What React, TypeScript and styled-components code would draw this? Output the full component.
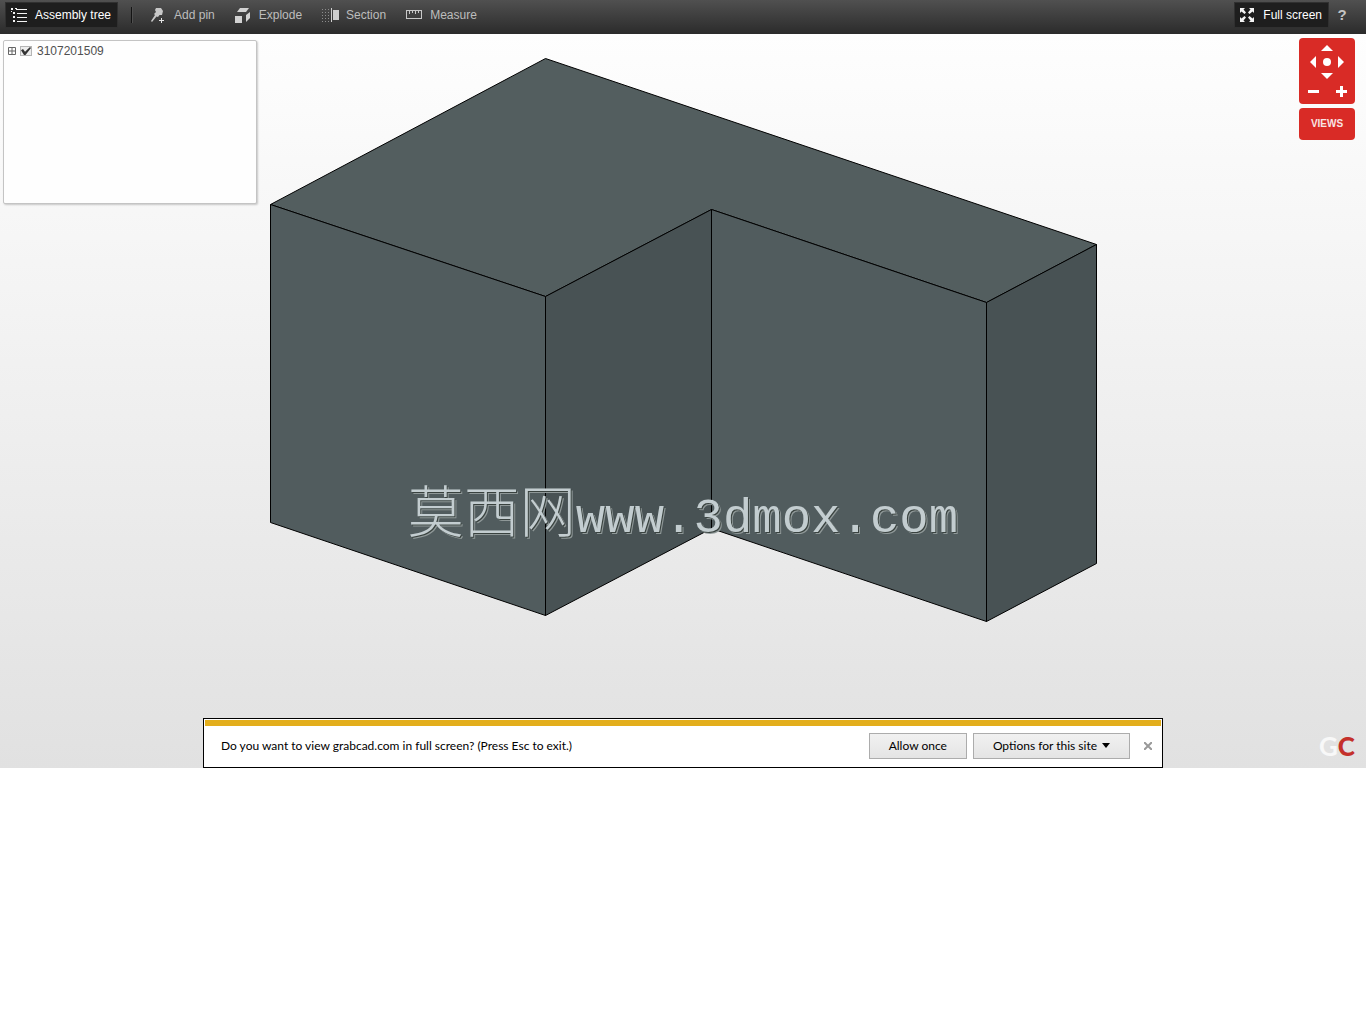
import React from "react";
import styled, { createGlobalStyle } from "styled-components";

const GlobalStyle = createGlobalStyle`
  *, *::before, *::after { box-sizing: border-box; }
  body {
    margin: 0;
    background: #fff;
    font-family: "Liberation Sans", Arial, sans-serif;
    font-size: 12px;
    line-height: 16px;
  }
  button { font: inherit; cursor: pointer; }
`;

const Toolbar = styled.header`
  display: flex;
  align-items: center;
  justify-content: space-between;
  height: 34px;
  padding: 0 17px 4px 5px;
  background: linear-gradient(#505050, #2b2b2b);
`;

const ToolGroup = styled.div<{ $gap?: number }>`
  display: flex;
  align-items: center;
  gap: ${(p) => p.$gap ?? 0}px;
`;

const ToolButton = styled.button<{ $active?: boolean }>`
  display: flex;
  align-items: center;
  gap: 7px;
  height: 26px;
  padding: 0 6px 0 5px;
  border: 1px solid ${(p) => (p.$active ? "#303030" : "transparent")};
  background: ${(p) => (p.$active ? "#1e1e1e" : "transparent")};
  color: ${(p) => (p.$active ? "#fff" : "#bdbdbd")};
  white-space: nowrap;
`;

const Divider = styled.span`
  width: 2px;
  height: 16px;
  margin: 0 11px 0 13px;
  border-left: 1px solid #141414;
  border-right: 1px solid #505050;
`;

const HelpButton = styled.button`
  padding: 0;
  width: 14px;
  margin-left: 6px;
  border: 0;
  background: transparent;
  color: #c4c4c4;
  font-size: 15px;
  font-weight: bold;
`;

const Icon = styled.svg`
  display: block;
  flex: none;
`;

const Viewer = styled.main`
  display: grid;
  background: linear-gradient(#fefefe, #e1e1e1);
  & > * { grid-area: 1 / 1; }
`;

const Scene = styled.svg`
  display: block;
  width: 100%;
  height: auto;
`;

const TreePanel = styled.aside`
  place-self: start;
  width: 254px;
  height: 164px;
  margin: 6px 3px;
  padding: 2px 4px;
  border: 1px solid #c4c4c4;
  border-radius: 2px;
  background: #fefefe;
  box-shadow: 1px 1px 2px rgba(0, 0, 0, 0.2);
`;

const TreeRow = styled.div`
  display: flex;
  align-items: center;
  gap: 4px;
  color: #505050;
`;

const Expander = styled.button`
  padding: 0;
  border: 0;
  background: transparent;
`;

const TreeLabel = styled.label`
  display: flex;
  align-items: center;
  gap: 5px;
`;

const TreeCheck = styled.input`
  appearance: none;
  display: grid;
  width: 12px;
  height: 10px;
  margin: 0;
  border: 1px solid #b5b5b5;
  background: #ededed;
  &:checked::after {
    content: "";
    width: 10px;
    height: 8px;
    background: #333;
    clip-path: polygon(0 40%, 20% 25%, 40% 58%, 90% 0, 100% 12%, 45% 100%, 30% 100%);
  }
`;

const ViewControls = styled.div`
  place-self: start end;
  display: grid;
  gap: 4px;
  width: 56px;
  margin: 4px 11px;
`;

const NavPad = styled.div`
  display: grid;
  grid-template-columns: repeat(6, 1fr);
  grid-template-rows: 10px 18px 10px 20px;
  align-items: center;
  height: 66px;
  padding: 5px 7px;
  border-radius: 4px;
  background: #d92b26;
`;

const NavButton = styled.button<{ $span: string }>`
  grid-column: ${(p) => p.$span};
  display: grid;
  place-items: center;
  height: 100%;
  padding: 0;
  border: 0;
  background: transparent;
`;

const ViewsButton = styled.button`
  height: 32px;
  padding: 0;
  border: 0;
  border-radius: 4px;
  background: #d92b26;
  color: #f8e4e3;
  font-size: 10px;
  font-weight: bold;
`;

const Watermark = styled.div`
  place-self: start center;
  display: flex;
  align-items: baseline;
  margin-top: 438px;
  color: #c3cdd0;
  font-family: "Liberation Mono", monospace;
  font-size: 49px;
  line-height: 72px;
  white-space: nowrap;
  text-shadow: 1px 1px 0 #39423f, 2px 2px 0 #8f9898;
  pointer-events: none;
`;

const WatermarkName = styled.span`
  font-family: "Noto Sans CJK SC", sans-serif;
  font-size: 56px;
  font-weight: 300;
`;

const Brand = styled.div`
  place-self: end;
  margin: 0 11px 7px;
  color: #f8f8f8;
  font-family: Lato, sans-serif;
  font-size: 26px;
  font-weight: 700;
  line-height: 30px;
`;

const BrandAccent = styled.span`
  color: #c4302b;
  font-weight: 900;
`;

const Prompt = styled.section`
  place-self: end center;
  display: flex;
  align-items: center;
  width: 960px;
  max-width: 100%;
  height: 50px;
  padding: 5px 8px 0 17px;
  border: 1px solid #000;
  background: linear-gradient(#e3ae1c, #e3ae1c) 50% 1px / calc(100% - 2px) 6px no-repeat #fff;
  color: #000;
  font-family: Lato, sans-serif;
`;

const PromptText = styled.p`
  flex: 1;
  margin: 0;
`;

const PromptButton = styled.button`
  display: flex;
  align-items: center;
  gap: 5px;
  height: 26px;
  margin-right: 6px;
  padding: 0 19px;
  border: 1px solid #acacac;
  background: linear-gradient(#f1f1f1, #e4e4e4);
  color: #000;
  white-space: nowrap;
`;

const CloseButton = styled.button`
  display: grid;
  place-items: center;
  width: 12px;
  height: 12px;
  margin-left: 6px;
  padding: 0;
  border: 0;
  background: transparent;
`;

const TreeIcon = () => (
  <Icon width="17" height="16" viewBox="0 0 17 16" fill="#f4f4f4">
    <path d="M0 1h2v2H0zM4 1h2v1H4zM2 5h2v2H2zM2 9h2v2H2zM2 13h2v2H2zM0 4h1v1H0zM5 2h11v1H5zM6 6h10v1H6zM6 10h10v1H6zM6 14h10v1H6z" />
  </Icon>
);

const PinIcon = () => (
  <Icon width="17" height="17" viewBox="0 0 17 17">
    <path d="M5 3l1-2h5l2 3-1 4H9.500L8 10 6.500 9.500 2 15l-1-1 4-6-1-1 2-2z" fill="#c8c8c8" />
    <path d="M11.500 11v5M9 13.500h5" stroke="#e5e5e5" />
  </Icon>
);

const ExplodeIcon = () => (
  <Icon width="17" height="17" viewBox="0 0 17 17" fill="#d2d2d2">
    <path d="M0 9h7v7H0zM5 1h9l-3 4H2zM11 8l4-3v6l-4 4z" />
  </Icon>
);

const SectionIcon = () => (
  <Icon width="17" height="14" viewBox="0 0 17 14">
    <path d="M0 1.500h8M0 4.500h8M0 7.500h8M0 10.500h8M0 13.500h8" stroke="#8c8c8c" strokeDasharray="1 2" />
    <path d="M9 0h1v14H9zM11 2h6v10h-6z" fill="#cfcfcf" />
  </Icon>
);

const MeasureIcon = () => (
  <Icon width="17" height="10" viewBox="0 0 17 10" fill="none" stroke="#c8c8c8">
    <rect x=".5" y=".5" width="15" height="8" />
    <path d="M3.500 1v3M6.500 1v2M9.500 1v3M12.500 1v2" />
  </Icon>
);

const FullScreenIcon = () => (
  <Icon width="16" height="15" viewBox="0 0 16 15" fill="#f4f4f4">
    <path d="M0 0h5L3.500 1.500 6 4.500 4.500 6 1.500 3.500 0 5zM14 0v5l-1.500-1.500L9.500 6 8 4.500l2.500-3L9 0zM0 14V9l1.500 1.500L4.500 8 6 9.500 3.500 12.500 5 14zM14 14H9l1.500-1.500L8 9.500 9.500 8l3 2.500L14 9z" />
  </Icon>
);

const tools = [
  { label: "Add pin", icon: <PinIcon /> },
  { label: "Explode", icon: <ExplodeIcon /> },
  { label: "Section", icon: <SectionIcon /> },
  { label: "Measure", icon: <MeasureIcon /> },
];

const navButtons = [
  { label: "Up", span: "1 / 7", w: 12, h: 6, d: "M0 6L6 0l6 6z" },
  { label: "Left", span: "1 / 3", w: 6, h: 12, d: "M6 0v12L0 6z" },
  { label: "Centre", span: "3 / 5", w: 8, h: 8, d: "M4 0a4 4 0 0 1 0 8a4 4 0 0 1 0-8z" },
  { label: "Right", span: "5 / 7", w: 6, h: 12, d: "M0 0v12l6-6z" },
  { label: "Down", span: "1 / 7", w: 12, h: 6, d: "M0 0h12L6 6z" },
  { label: "Zoom out", span: "1 / 3", w: 11, h: 3, d: "M0 0h11v3H0z" },
  { label: "Zoom in", span: "5 / 7", w: 11, h: 11, d: "M4 0h3v4h4v3H7v4H4V7H0V4h4z" },
];

const faces = [
  { points: "270,204 545,58 1096,244 986,302 711,209 545,296", fill: "#535e5f" },
  { points: "270,204 545,296 545,615 270,522", fill: "#515c5e" },
  { points: "545,296 711,209 711,528 545,615", fill: "#485254" },
  { points: "711,209 986,302 986,621 711,528", fill: "#515c5e" },
  { points: "986,302 1096,244 1096,563 986,621", fill: "#485254" },
];

export default function App() {
  return (
    <>
      <GlobalStyle />
      <Toolbar>
        <ToolGroup>
          <ToolButton $active>
            <TreeIcon />
            Assembly tree
          </ToolButton>
          <Divider />
          <ToolGroup $gap={7}>
            {tools.map((t) => (
              <ToolButton key={t.label}>
                {t.icon}
                {t.label}
              </ToolButton>
            ))}
          </ToolGroup>
        </ToolGroup>
        <ToolGroup>
          <ToolButton $active>
            <FullScreenIcon />
            Full screen
          </ToolButton>
          <HelpButton>?</HelpButton>
        </ToolGroup>
      </Toolbar>

      <Viewer>
        <Scene viewBox="0 34 1366 734" role="img" aria-label="L-shaped part">
          {faces.map((f) => (
            <polygon key={f.points} points={f.points} fill={f.fill} stroke="#000" transform="translate(.5 .5)" strokeLinejoin="round" />
          ))}
        </Scene>

        <TreePanel>
          <TreeRow>
            <Expander aria-label="Expand">
              <Icon width="8" height="8" viewBox="0 0 8 8" fill="none" stroke="#666">
                <path d="M.5 .5h7v7h-7zM0 4h8M4 0v8" />
              </Icon>
            </Expander>
            <TreeLabel>
              <TreeCheck type="checkbox" defaultChecked />
              3107201509
            </TreeLabel>
          </TreeRow>
        </TreePanel>

        <Watermark>
          <WatermarkName>莫西网</WatermarkName>www.3dmox.com
        </Watermark>

        <ViewControls>
          <NavPad>
            {navButtons.map((b) => (
              <NavButton key={b.label} $span={b.span} aria-label={b.label}>
                <Icon width={b.w} height={b.h} viewBox={`0 0 ${b.w} ${b.h}`} fill="#fff">
                  <path d={b.d} />
                </Icon>
              </NavButton>
            ))}
          </NavPad>
          <ViewsButton>VIEWS</ViewsButton>
        </ViewControls>

        <Brand>
          G<BrandAccent>C</BrandAccent>
        </Brand>

        <Prompt>
          <PromptText>Do you want to view grabcad.com in full screen? (Press Esc to exit.)</PromptText>
          <PromptButton>Allow once</PromptButton>
          <PromptButton>
            Options for this site
            <Icon width="8" height="5" viewBox="0 0 8 5">
              <path d="M0 0h8L4 5z" />
            </Icon>
          </PromptButton>
          <CloseButton aria-label="Close">
            <Icon width="8" height="8" viewBox="0 0 8 8" stroke="#999" strokeWidth="2">
              <path d="M0 0l8 8M8 0L0 8" />
            </Icon>
          </CloseButton>
        </Prompt>
      </Viewer>
    </>
  );
}
